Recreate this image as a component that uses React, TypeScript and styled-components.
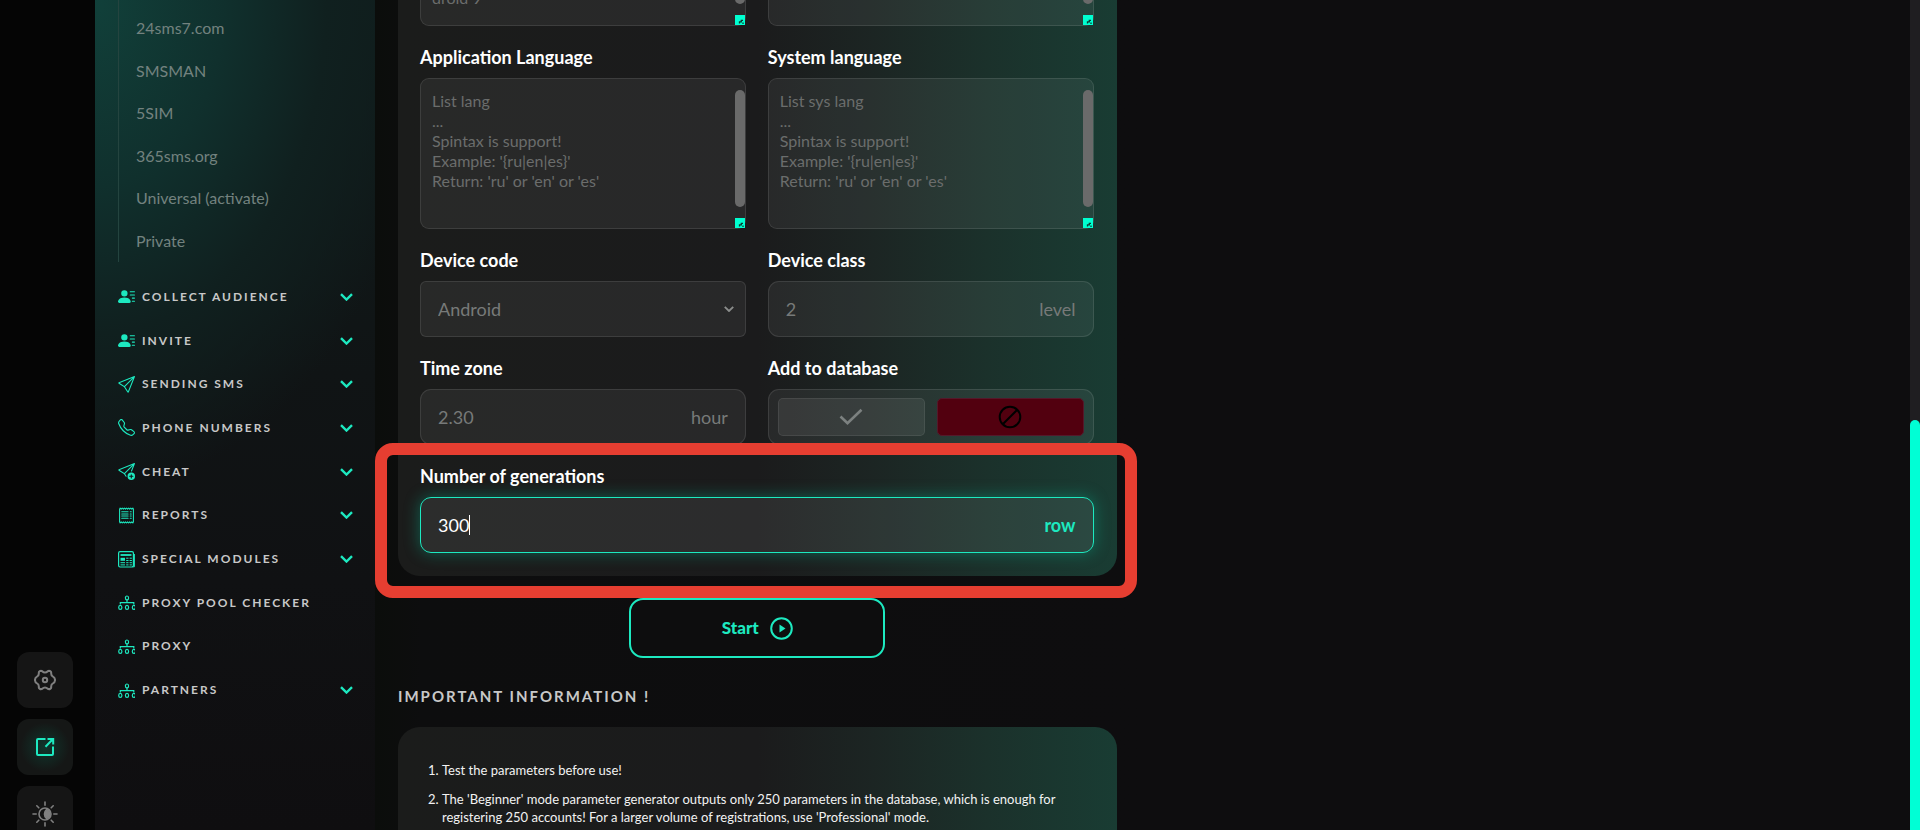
import React from "react";
import styled, { createGlobalStyle, css } from "styled-components";
import {
  BsPersonLinesFill,
  BsReceipt,
  BsSend,
  BsSendPlus,
  BsTelephone,
} from "react-icons/bs";

const accent = "#1de9c0";

const GlobalStyle = createGlobalStyle`
  *, *::before, *::after { box-sizing: border-box; }
  body {
    margin: 0;
    background: #0e0d0f;
    color: #fff;
    font-family: Lato, "Open Sans", sans-serif;
  }
  button, input, select, textarea { font-family: inherit; }
`;

const Page = styled.div`
  display: flex;
  height: 100vh;
  overflow: hidden;
`;

/* ---------- rail ---------- */

const Rail = styled.nav`
  flex: 0 0 95px;
  display: flex;
  flex-direction: column;
  justify-content: flex-end;
  gap: 11px;
  padding-left: 17px;
  margin-bottom: -12px;
  background: #050505;
`;

const RailButton = styled.button<{ $active?: boolean }>`
  display: grid;
  place-items: center;
  width: 56px;
  height: 56px;
  padding: 0;
  border: 0;
  border-radius: 12px;
  background: #151515;
  color: #808080;
  ${(p) =>
    p.$active &&
    css`
      color: ${accent};
      background: radial-gradient(circle, #10352c 0%, #151716 62%);
    `}
`;

/* ---------- sidebar ---------- */

const Sidebar = styled.aside`
  flex: 0 0 280px;
  padding: 0 22px 0 23px;
  background:
    radial-gradient(ellipse 340px 490px at 0 0, #11403a 0%, #10302d 38%, #10201f 68%, rgba(16, 17, 18, 0) 100%),
    linear-gradient(180deg, #101c1c 0%, #101415 45%, #101113 70%, #0f0e10 100%);
`;

const SubMenu = styled.ul`
  display: grid;
  grid-auto-rows: 1fr;
  align-items: center;
  height: 262px;
  margin: 0;
  padding: 7px 0 0 17px;
  border-left: 1px solid #24443f;
  list-style: none;
`;

const SubLink = styled.a`
  color: #73827f;
  font-size: 16px;
  line-height: 24px;
  text-decoration: none;
`;

const Menu = styled.ul`
  display: grid;
  grid-auto-rows: 1fr;
  align-items: center;
  height: 437px;
  margin: 13px 0 0;
  padding: 0;
  list-style: none;
`;

const MenuLink = styled.a`
  display: flex;
  align-items: center;
  gap: 7px;
  color: #c8c8c8;
  font-size: 12px;
  line-height: 20px;
  font-weight: 700;
  letter-spacing: 2px;
  text-decoration: none;
  text-transform: uppercase;

  svg {
    flex: none;
    color: ${accent};
  }
`;

const MenuText = styled.span`
  flex: 1;
`;

/* ---------- content ---------- */

const Main = styled.main`
  flex: 1;
  min-width: 0;
  background: linear-gradient(90deg, #0b0d0b 0%, #0d0d0e 3%, #0e0d0f 50%);
`;

const Column = styled.div`
  width: 50%;
  margin-top: -125px;
  padding: 0 26px 0 23px;
`;

const Card = styled.section<{ $rounded: "top" | "bottom" }>`
  padding: ${(p) => (p.$rounded === "top" ? "34px 22px" : "0 23px 23px 22px")};
  border-radius: ${(p) => (p.$rounded === "top" ? "22px 22px 0 0" : "0 0 22px 22px")};
  background: linear-gradient(90deg, #1b1c1b 0%, #1b1b1c 50%, #1c2523 66%, #1b312b 82%, #193c33 100%);
`;

const Fields = styled.form`
  display: grid;
  grid-template-columns: 1fr 1fr;
  gap: 19px 22px;
`;

const Field = styled.div<{ $wide?: boolean }>`
  position: relative;
  display: flex;
  flex-direction: column;
  gap: 9px;
  grid-column: ${(p) => (p.$wide ? "1 / -1" : "auto")};
`;

const labelText = css`
  font-size: 18px;
  line-height: 24px;
  font-weight: 700;
  color: #fff;
`;

const Label = styled.label`
  ${labelText}
`;

const LabelText = styled.span`
  ${labelText}
`;

const surface = css`
  border: 1px solid rgba(255, 255, 255, 0.1);
  background: rgba(255, 255, 255, 0.06);
`;

const AreaBox = styled.div`
  position: relative;
  display: flex;
`;

const Area = styled.textarea`
  ${surface}
  flex: 1;
  min-width: 0;
  height: 151px;
  padding: 12px 22px 12px 11px;
  border-radius: 9px;
  outline: 0;
  resize: none;
  overflow: hidden;
  color: #fff;
  font-size: 16px;
  line-height: 20px;

  &::placeholder { color: #6b6d6c; opacity: 1; }
`;

const AreaThumb = styled.span`
  position: absolute;
  top: 12px;
  right: 1px;
  bottom: 22px;
  width: 10px;
  border-radius: 5px;
  background: #6a6a6a;
`;

const Grip = styled.span`
  position: absolute;
  right: 1px;
  bottom: 1px;
  display: flex;
  width: 10px;
  height: 10px;
  background: #00ffd0;
`;

const ControlBox = styled.div<{ $focused?: boolean; $square?: boolean }>`
  ${surface}
  position: relative;
  display: flex;
  align-items: center;
  height: 56px;
  padding: 0 17px;
  border-radius: ${(p) => (p.$square ? "6px" : "11px")};
  font-size: 18px;
  line-height: 24px;
  color: #777a79;
  ${(p) =>
    p.$focused &&
    css`
      color: ${accent};
      font-weight: 700;
      border-color: ${accent};
      background: rgba(255, 255, 255, 0.08);
      box-shadow: 0 0 16px rgba(0, 200, 160, 0.4);
    `}
`;

const Input = styled.input<{ $hug?: boolean }>`
  flex: ${(p) => (p.$hug ? "none" : "1")};
  field-sizing: ${(p) => (p.$hug ? "content" : "fixed")};
  min-width: 0;
  padding: 0;
  border: 0;
  outline: 0;
  background: none;
  color: #fff;
  font-size: 18px;
  line-height: 24px;

  &::placeholder { color: #777a79; opacity: 1; }
`;

const Caret = styled.span`
  width: 1px;
  height: 20px;
  background: #fff;
`;

const Unit = styled.span`
  margin-left: auto;
`;

const Select = styled.select`
  flex: 1;
  height: 100%;
  padding: 0;
  border: 0;
  outline: 0;
  appearance: none;
  background: none;
  color: #777a79;
  font-size: 18px;

  option { background: #222; }
`;

const SelectArrow = styled.span`
  position: absolute;
  right: 11px;
  display: flex;
  color: #8b8d8c;
  pointer-events: none;
`;

const Choices = styled.div`
  ${surface}
  display: grid;
  grid-template-columns: 1fr 1fr;
  gap: 12px;
  height: 56px;
  padding: 8px 9px;
  border-radius: 11px;
`;

const Choice = styled.button<{ $denied?: boolean }>`
  display: grid;
  place-items: center;
  padding: 0;
  border: 1px solid ${(p) => (p.$denied ? "#55182a" : "rgba(255, 255, 255, 0.08)")};
  border-radius: 5px;
  background: ${(p) => (p.$denied ? "#52000f" : "rgba(255, 255, 255, 0.07)")};
  color: ${(p) => (p.$denied ? "#000" : "#7c8180")};
`;

const Highlight = styled.div`
  position: absolute;
  inset: -21px -43px -45px -45px;
  border: 12px solid #e63e31;
  border-radius: 18px;
  pointer-events: none;
`;

const StartButton = styled.button`
  display: flex;
  align-items: center;
  justify-content: center;
  gap: 11px;
  width: 256px;
  height: 60px;
  margin: 22px auto 0;
  border: 2px solid ${accent};
  border-radius: 14px;
  background: #0d0d0e;
  color: ${accent};
  font-size: 17px;
  line-height: 24px;
  font-weight: 900;
`;

const Title = styled.h2`
  margin: 26px 0 19px;
  color: #c8c8c8;
  font-size: 15px;
  line-height: 24px;
  font-weight: 700;
  letter-spacing: 2px;
  text-transform: uppercase;
`;

const Notes = styled.ol`
  display: grid;
  gap: 11px;
  margin: 0;
  padding: 0 12px 0 22px;
  font-size: 13px;
  line-height: 18px;
  color: #f2f2f2;
`;

/* ---------- page scroll bar ---------- */

const ScrollTrack = styled.div`
  flex: 0 0 10px;
  display: flex;
  align-items: flex-end;
  background: #1f1e21;
`;

const ScrollThumb = styled.div`
  width: 10px;
  height: calc(50% - 5px);
  border-radius: 5px 5px 0 0;
  background: #00ffd5;
`;

/* ---------- drawings ---------- */

const Chevron = ({ width = 13 }: { width?: number }) => (
  <svg width={width} height={width * 0.62} viewBox="0 0 13 8" fill="none" stroke="currentColor" strokeWidth="2.4" aria-hidden>
    <path d="M1 1.2 6.5 6.5 12 1.2" />
  </svg>
);

const TreeIcon = () => (
  <svg width="17" height="17" viewBox="0 0 17 17" fill="none" stroke="currentColor" strokeWidth="1.2" aria-hidden>
    <ellipse cx="9" cy="3.9" rx="1.6" ry="1.9" />
    <ellipse cx="2.3" cy="13.4" rx="1.6" ry="2" />
    <ellipse cx="9" cy="13.4" rx="1.6" ry="2" />
    <ellipse cx="15.9" cy="13.4" rx="1.6" ry="2" />
    <path d="M9 5.8v3.2M2.3 10.500V8.700h13.500v1.800" />
  </svg>
);

const ModulesIcon = () => (
  <svg width="17" height="17" viewBox="0 0 17 17" fill="none" stroke="currentColor" strokeWidth="1" aria-hidden>
    <rect x=".6" y=".6" width="14.800" height="15.400" rx="1.400" strokeWidth="1.200" />
    <path d="M16.400 3v12.800h-2" />
    <path d="M2.500 4h11" strokeWidth="1.800" />
    <path d="M2.500 8.300h4.500" strokeWidth="3" />
    <path d="M8.200 7.200h2.300M11.600 7.200h2.300M8.200 9.500h2.300M11.600 9.500h2.300M2.500 11.700h4.500M8.200 11.700h2.300M11.600 11.700h2.300M2.500 13.900h4.500M8.200 13.900h2.300M11.600 13.900h2.300" />
  </svg>
);

const GearIcon = () => (
  <svg width="22" height="22" viewBox="0 0 22 22" fill="none" stroke="currentColor" strokeWidth="2" strokeLinejoin="round" aria-hidden>
    <path d="M8.2 2.2C9 3 10 3.6 11 3.6S13 3 13.800 2.200C15.500 1.300 17.400 2.500 17.200 4.200C17.100 5.700 17.500 7 19 7.600C21.700 8.700 21.700 13.300 19 14.400C17.500 15 17.100 16.300 17.200 17.800C17.400 19.500 15.500 20.700 13.800 19.800C13 19 12 18.400 11 18.400S9 19 8.200 19.800C6.500 20.700 4.600 19.500 4.800 17.800C4.900 16.300 4.500 15 3 14.400C.3 13.300 .3 8.700 3 7.600C4.500 7 4.900 5.700 4.800 4.200C4.600 2.500 6.500 1.300 8.200 2.200Z" />
    <circle cx="11" cy="11" r="2.200" />
  </svg>
);

const OpenIcon = () => (
  <svg width="20" height="20" viewBox="0 0 20 20" fill="none" stroke="currentColor" strokeWidth="2" aria-hidden>
    <path d="M10.500 2H3a1 1 0 0 0-1 1v14a1 1 0 0 0 1 1h14a1 1 0 0 0 1-1V9.500" />
    <path d="M10.500 9.700 18 2M12.500 2H18.200V7.600" />
  </svg>
);

const SunIcon = () => (
  <svg width="26" height="26" viewBox="0 0 26 26" fill="none" stroke="currentColor" strokeWidth="1.600" strokeLinecap="round" aria-hidden>
    <circle cx="13" cy="13" r="6" />
    <path d="M14.500 8.500a6 6 0 0 0 0 9a4.700 4.700 0 0 0 0-9Z" fill="currentColor" />
    <path d="M13 1v3.200M13 21.800V25M1 13h3.200M21.800 13H25M4.800 4.800l2 2M19.200 19.200l2 2M4.800 21.200l2-2M19.200 6.800l2-2" />
  </svg>
);

const CheckIcon = () => (
  <svg width="24" height="18" viewBox="0 0 24 18" fill="none" stroke="currentColor" strokeWidth="2.600" aria-hidden>
    <path d="M1.500 8.500 8.500 15.300 22.500 1.800" />
  </svg>
);

const BanIcon = () => (
  <svg width="24" height="24" viewBox="0 0 24 24" fill="none" stroke="currentColor" strokeWidth="2" aria-hidden>
    <circle cx="12" cy="12" r="10.300" />
    <path d="M4.700 19.300 19.300 4.700" />
  </svg>
);

const PlayIcon = () => (
  <svg width="23" height="23" viewBox="0 0 23 23" fill="none" stroke="currentColor" strokeWidth="2" aria-hidden>
    <circle cx="11.500" cy="11.500" r="10.300" />
    <path d="M9.500 7.500v8l6-4Z" fill="currentColor" stroke="none" />
  </svg>
);

const GripIcon = () => (
  <svg width="10" height="10" viewBox="0 0 10 10" fill="none" stroke="#0a3a30" strokeWidth="1.300" aria-hidden>
    <path d="M4.500 8.500V6.800H6.300V5.300H8M8 7.500V9" />
  </svg>
);

const services = ["24sms7.com", "SMSMAN", "5SIM", "365sms.org", "Universal (activate)", "Private"];

const sections: { title: string; icon: React.ReactNode; leaf?: boolean }[] = [
  { title: "Collect audience", icon: <BsPersonLinesFill size={17} /> },
  { title: "Invite", icon: <BsPersonLinesFill size={17} /> },
  { title: "Sending SMS", icon: <BsSend size={17} /> },
  { title: "Phone numbers", icon: <BsTelephone size={17} /> },
  { title: "Cheat", icon: <BsSendPlus size={17} /> },
  { title: "Reports", icon: <BsReceipt size={17} /> },
  { title: "Special modules", icon: <ModulesIcon /> },
  { title: "Proxy pool checker", icon: <TreeIcon />, leaf: true },
  { title: "Proxy", icon: <TreeIcon />, leaf: true },
  { title: "Partners", icon: <TreeIcon /> },
];

const example = "...\nSpintax is support!\nExample: '{ru|en|es}'\nReturn: 'ru' or 'en' or 'es'";

function ListArea({ id, label, placeholder }: { id: string; label?: string; placeholder: string }) {
  return (
    <Field>
      {label && <Label htmlFor={id}>{label}</Label>}
      <AreaBox>
        <Area id={id} placeholder={placeholder} aria-label={label ? undefined : id} />
        <AreaThumb />
        <Grip>
          <GripIcon />
        </Grip>
      </AreaBox>
    </Field>
  );
}

export default function App() {
  return (
    <Page>
      <GlobalStyle />
      <Rail>
        <RailButton aria-label="Settings">
          <GearIcon />
        </RailButton>
        <RailButton aria-label="Open" $active>
          <OpenIcon />
        </RailButton>
        <RailButton aria-label="Theme">
          <SunIcon />
        </RailButton>
      </Rail>

      <Sidebar>
        <SubMenu>
          {services.map((name) => (
            <li key={name}>
              <SubLink href="#">{name}</SubLink>
            </li>
          ))}
        </SubMenu>
        <Menu>
          {sections.map((s) => (
            <li key={s.title}>
              <MenuLink href="#">
                {s.icon}
                <MenuText>{s.title}</MenuText>
                {!s.leaf && <Chevron />}
              </MenuLink>
            </li>
          ))}
        </Menu>
      </Sidebar>

      <Main>
        <Column>
          <Card $rounded="bottom">
            <Fields onSubmit={(e) => e.preventDefault()}>
              <ListArea id="system" placeholder={"\n\n\n\n\ndroid 9"} />
              <ListArea id="version" placeholder="" />
              <ListArea id="app-lang" label="Application Language" placeholder={"List lang\n" + example} />
              <ListArea id="sys-lang" label="System language" placeholder={"List sys lang\n" + example} />
              <Field>
                <Label htmlFor="code">Device code</Label>
                <ControlBox $square>
                  <Select id="code" defaultValue="Android">
                    <option>Android</option>
                  </Select>
                  <SelectArrow>
                    <Chevron width={10} />
                  </SelectArrow>
                </ControlBox>
              </Field>
              <Field>
                <Label htmlFor="class">Device class</Label>
                <ControlBox>
                  <Input id="class" placeholder="2" />
                  <Unit>level</Unit>
                </ControlBox>
              </Field>
              <Field>
                <Label htmlFor="zone">Time zone</Label>
                <ControlBox>
                  <Input id="zone" placeholder="2.30" />
                  <Unit>hour</Unit>
                </ControlBox>
              </Field>
              <Field>
                <LabelText id="add-label">Add to database</LabelText>
                <Choices role="group" aria-labelledby="add-label">
                  <Choice type="button" aria-label="Yes">
                    <CheckIcon />
                  </Choice>
                  <Choice type="button" aria-label="No" aria-pressed $denied>
                    <BanIcon />
                  </Choice>
                </Choices>
              </Field>
              <Field $wide>
                <Label htmlFor="count">Number of generations</Label>
                <ControlBox $focused>
                  <Input id="count" defaultValue="300" $hug />
                  <Caret />
                  <Unit>row</Unit>
                </ControlBox>
                <Highlight />
              </Field>
            </Fields>
          </Card>
          <StartButton>
            Start
            <PlayIcon />
          </StartButton>
          <Title>Important information !</Title>
          <Card $rounded="top">
            <Notes>
              <li>Test the parameters before use!</li>
              <li>
                The 'Beginner' mode parameter generator outputs only 250 parameters in the database, which is enough
                for registering 250 accounts! For a larger volume of registrations, use 'Professional' mode.
              </li>
            </Notes>
          </Card>
        </Column>
      </Main>

      <ScrollTrack>
        <ScrollThumb />
      </ScrollTrack>
    </Page>
  );
}
